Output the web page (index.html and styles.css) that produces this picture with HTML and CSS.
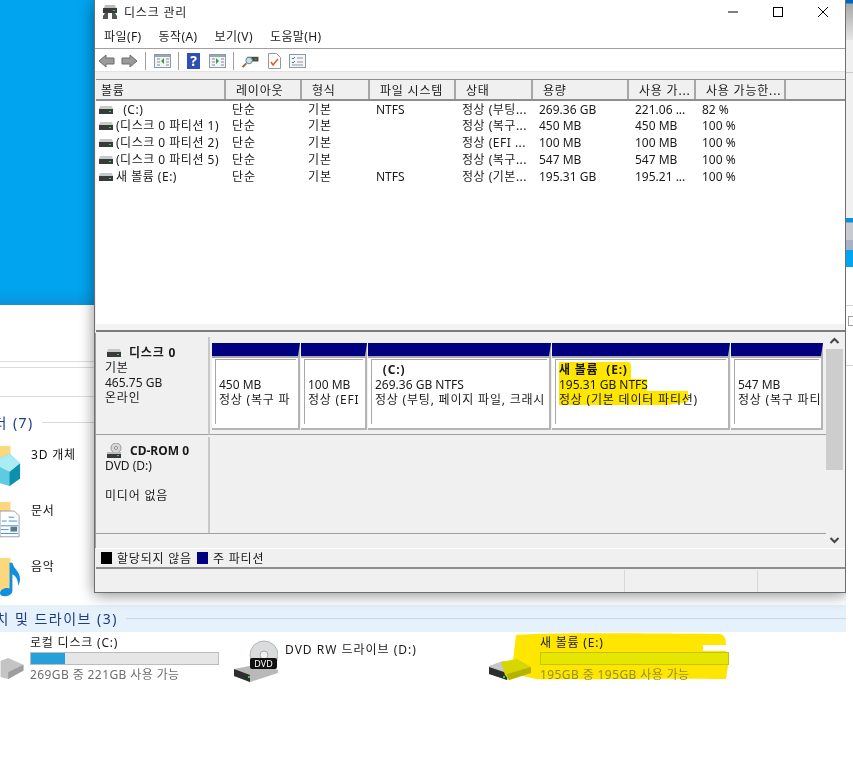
FILE: index.html
```html
<!DOCTYPE html>
<html lang="ko">

<head>
    <title>디스크 관리</title>
    <meta charset="UTF-8">
    <link rel="stylesheet" href="styles.css">
</head>

<body>
<svg class="defs" width="0" height="0">
    <symbol id="hdd" viewBox="0 0 14 8">
        <path d="M1 0h12l1 3H0z" fill="#c9c9c9"/>
        <rect y="3" width="14" height="5" fill="#3a3a3a"/>
        <rect x="10" y="5" width="2" height="1" fill="#35d04a"/>
    </symbol>
    <symbol id="arrow" viewBox="0 0 17 14">
        <path d="M8 1 1 7l7 6V10h8V4H8z" fill="#9a9a9a" stroke="#6d6d6d"/>
    </symbol>
    <symbol id="panel" viewBox="0 0 17 14">
        <rect x=".5" y=".5" width="16" height="13" fill="#f4f4f4" stroke="#8a9aa6"/>
        <rect x="1" y="1" width="15" height="2" fill="#9aa7b2"/>
        <path d="M3 5h3M3 8h3M3 11h3M12 5h3M12 8h3M12 11h3" stroke="#7f8f9c"/>
    </symbol>
</svg>

<svg class="marker-drive" viewBox="0 0 222 48">
    <path d="M10 3 C60 0 170 2 214 2 Q220 3 220 12 L220 13 H197 V19 H220 L222 34 220 47 C150 46 60 48 30 47 L0 40 C4 30 8 30 8 20z" fill="#ffe600"/>
</svg>

<div class="explorer">
    <div class="wallpaper"></div>
    <div class="rules">
        <div class="rule"></div>
        <div class="rule"></div>
        <div class="rule"></div>
    </div>

    <div class="group-title folders"><span>폴더 (7)</span><i></i></div>
    <div class="folder-item first">
        <svg class="folder-icon" viewBox="0 0 22 42">
            <rect width="11" height="30" fill="#fbd87d"/>
            <path d="M0 13 10 8l11 10v16L10 42 0 39z" fill="#5fcbe0"/>
            <path d="M10 27v15l11-8V18z" fill="#0e8fae"/>
            <path d="M0 13 10 8l11 10-11 9-10-5z" fill="#a9ecf3"/>
        </svg>
        <span>3D 개체</span>
    </div>
    <div class="folder-item">
        <svg class="folder-icon" viewBox="0 0 22 42">
            <rect width="11" height="28" fill="#fbd87d"/>
            <path d="M0 9.500h15l5 5v22H0z" fill="#fff" stroke="#9b9b9b"/>
            <path d="M2 20h5M9 16h6M9 20h9M1 25h18M1 29h8M1 33h18" stroke="#3d8fd1"/>
            <rect x="11" y="26" width="7" height="5" fill="#5b7a8c"/>
        </svg>
        <span>문서</span>
    </div>
    <div class="folder-item last">
        <svg class="folder-icon" viewBox="0 0 22 42">
            <rect width="11" height="36" fill="#fbd87d"/>
            <path d="M10 5h3c1 6 8 9 8 17 0 3-1 5-2 7 0-6-2-10-6-12v17c0 4-4 6-8 6-3 0-5-1-5-3 0-4 6-7 10-5z" fill="#0f8fe0"/>
        </svg>
        <span>음악</span>
    </div>

    <div class="group-title drives"><span>장치 및 드라이브 (3)</span><i></i></div>
    <div class="drive-list">
        <div class="drive drive-c">
            <svg class="drive-icon small" viewBox="0 0 24 22">
                <path d="M0 3 8 0l16 7v6L8 22l-8-2z" fill="#c4c4c4"/>
                <path d="M8 22l16-9V7L8 15z" fill="#9e9e9e"/>
            </svg>
            <div class="drive-info">
                <div>로컬 디스크 (C:)</div>
                <div class="usage"><div class="used used-c"></div></div>
                <div class="free">269GB 중 221GB 사용 가능</div>
            </div>
        </div>
        <div class="drive drive-d">
            <svg class="dvd-icon" viewBox="0 0 44 42">
                <circle cx="30" cy="15" r="14" fill="#d8dcdc" stroke="#b5b5b5"/>
                <circle cx="30" cy="15" r="4" fill="#f2f2f2" stroke="#aaa"/>
                <path d="M0 29 26 24l18 6v3L16 42 0 36z" fill="#b9b9b9"/>
                <path d="M0 29v7l16 6 0-7z" fill="#2e2e2e"/>
                <rect x="16" y="18" width="27" height="11" rx="2" fill="#111"/>
                <text x="29.500" y="27" class="dvd-label">DVD</text>
                <rect x="14" y="36" width="2" height="2" fill="#35d04a"/>
            </svg>
            <div class="drive-name">DVD RW 드라이브 (D:)</div>
        </div>
        <div class="drive drive-e">
            <svg class="drive-icon" viewBox="0 0 42 21">
                <path d="M0 7 14 2l28 6v5L18 21 0 15z" fill="#c7c7c7"/>
                <path d="M0 8l18 6v7L0 15z" fill="#2d2d2d"/>
                <path d="M12 3 28 0l14 8v6L20 21l-4-5z" fill="#d6d600"/>
                <path d="M18 15 42 8v6L20 21z" fill="#b4b400"/>
                <rect x="14" y="17" width="2" height="2" fill="#35d04a"/>
            </svg>
            <div class="drive-info">
                <div>새 볼륨 (E:)</div>
                <div class="usage"><div class="used used-e"></div></div>
                <div class="free">195GB 중 195GB 사용 가능</div>
            </div>
        </div>
    </div>
</div>

<div class="window">
    <div class="titlebar">
        <svg class="title-icon" viewBox="0 0 16 14">
            <path d="M3 0h10l1 3H2z" fill="#bdbdbd"/>
            <rect x="1" y="3" width="14" height="5" fill="#3a3a3a"/>
            <rect x="11" y="5" width="2" height="1" fill="#35d04a"/>
            <path d="M3 8h3v6H1v-3zM10 8h3l2 3v3h-5z" fill="#555"/>
        </svg>
        <span class="title-text">디스크 관리</span>
        <div class="caption-buttons">
            <svg viewBox="0 0 10 10"><path d="M0 5h10" stroke="#000"/></svg>
            <svg viewBox="0 0 10 10"><rect x=".5" y=".5" width="9" height="9" fill="none" stroke="#000"/></svg>
            <svg viewBox="0 0 10 10"><path d="M0 0l10 10M10 0 0 10" stroke="#000"/></svg>
        </div>
    </div>

    <div class="menubar">
        <span>파일(F)</span>
        <span>동작(A)</span>
        <span>보기(V)</span>
        <span>도움말(H)</span>
    </div>

    <div class="toolbar">
        <svg class="tool"><use href="#arrow"/></svg>
        <svg class="tool flip"><use href="#arrow"/></svg>
        <i class="tool-sep"></i>
        <svg class="tool" viewBox="0 0 17 14">
            <use href="#panel"/>
            <path d="M10 4v6L7 7z" fill="#2f9e44"/>
        </svg>
        <i class="tool-sep"></i>
        <svg class="tool help" viewBox="0 0 13 16">
            <rect width="13" height="16" fill="#2f4fb5"/>
            <text x="6.500" y="13" class="help-mark">?</text>
        </svg>
        <svg class="tool" viewBox="0 0 17 14">
            <use href="#panel"/>
            <path d="M7 4v6l3-3z" fill="#2f9e44"/>
        </svg>
        <i class="tool-sep"></i>
        <svg class="tool" viewBox="0 0 17 15">
            <rect x="5" y="3" width="12" height="5" fill="#4a4a4a"/>
            <rect x="13" y="5" width="2" height="1" fill="#35d04a"/>
            <circle cx="7" cy="7" r="3.500" fill="#bfe0ee" stroke="#777"/>
            <path d="M4 10 0 14" stroke="#8a6a4a" stroke-width="2"/>
        </svg>
        <svg class="tool doc" viewBox="0 0 13 16">
            <path d="M.5.500h8l4 4v11H.5z" fill="#fff" stroke="#999"/>
            <path d="M3 9l2 3 5-6" fill="none" stroke="#e2592a" stroke-width="1.500"/>
        </svg>
        <svg class="tool" viewBox="0 0 17 14">
            <rect x=".5" y=".5" width="16" height="13" fill="#f6f6f6" stroke="#8a9aa6"/>
            <path d="M3 4l1 1 2-2M3 8l1 1 2-2" fill="none" stroke="#2f74c0"/>
            <path d="M8 4h6M8 8h6M3 11h11" stroke="#8a9aa6"/>
        </svg>
    </div>

    <div class="list-pane">
        <table class="volumes">
            <colgroup>
                <col class="c-volume"><col class="c-layout"><col class="c-type"><col class="c-fs">
                <col class="c-state"><col class="c-size"><col class="c-free"><col class="c-pct"><col>
            </colgroup>
            <thead>
                <tr>
                    <th>볼륨</th><th class="pad">레이아웃</th><th class="pad">형식</th><th class="pad">파일 시스템</th>
                    <th class="pad">상태</th><th class="pad">용량</th><th class="pad">사용 가...</th><th class="pad">사용 가능한...</th><th></th>
                </tr>
            </thead>
            <tbody>
                <tr>
                    <td><svg class="hdd"><use href="#hdd"/></svg>&nbsp; (C:)</td><td class="ko">단순</td><td class="ko">기본</td><td class="num">NTFS</td>
                    <td>정상 (부팅...</td><td class="num">269.36 GB</td><td class="num">221.06 ...</td><td class="num">82 %</td><td></td>
                </tr>
                <tr>
                    <td><svg class="hdd"><use href="#hdd"/></svg>(디스크 0 파티션 1)</td><td class="ko">단순</td><td class="ko">기본</td><td></td>
                    <td>정상 (복구...</td><td class="num">450 MB</td><td class="num">450 MB</td><td class="num">100 %</td><td></td>
                </tr>
                <tr>
                    <td><svg class="hdd"><use href="#hdd"/></svg>(디스크 0 파티션 2)</td><td class="ko">단순</td><td class="ko">기본</td><td></td>
                    <td>정상 (EFI ...</td><td class="num">100 MB</td><td class="num">100 MB</td><td class="num">100 %</td><td></td>
                </tr>
                <tr>
                    <td><svg class="hdd"><use href="#hdd"/></svg>(디스크 0 파티션 5)</td><td class="ko">단순</td><td class="ko">기본</td><td></td>
                    <td>정상 (복구...</td><td class="num">547 MB</td><td class="num">547 MB</td><td class="num">100 %</td><td></td>
                </tr>
                <tr>
                    <td><svg class="hdd"><use href="#hdd"/></svg>새 볼륨 (E:)</td><td class="ko">단순</td><td class="ko">기본</td><td class="num">NTFS</td>
                    <td>정상 (기본...</td><td class="num">195.31 GB</td><td class="num">195.21 ...</td><td class="num">100 %</td><td></td>
                </tr>
            </tbody>
        </table>
    </div>

    <div class="disk-pane">
        <div class="disk-rows">
            <div class="disk-row">
                <div class="disk-info">
                    <div class="disk-name"><svg class="hdd"><use href="#hdd"/></svg>디스크 0</div>
                    <div>기본</div>
                    <div class="num">465.75 GB</div>
                    <div>온라인</div>
                </div>
                <div class="partitions">
                    <div class="partition p1">
                        <div class="part-body"><div>&nbsp;</div><div class="num">450 MB</div><div>정상 (복구 파</div></div>
                    </div>
                    <div class="partition p2">
                        <div class="part-body"><div>&nbsp;</div><div class="num">100 MB</div><div>정상 (EFI</div></div>
                    </div>
                    <div class="partition p3">
                        <div class="part-body"><div class="part-name">&nbsp; (C:)</div><div class="num">269.36 GB NTFS</div><div>정상 (부팅, 페이지 파일, 크래시</div></div>
                    </div>
                    <div class="partition p4">
                        <div class="part-body"><div class="part-name">새 볼륨&nbsp; (E:)</div><div class="num">195.31 GB NTFS</div><div>정상 (기본 데이터 파티션)</div></div>
                    </div>
                    <div class="partition p5">
                        <div class="part-body"><div>&nbsp;</div><div class="num">547 MB</div><div>정상 (복구 파티</div></div>
                    </div>
                </div>
            </div>
            <div class="disk-row cd-row">
                <div class="disk-info">
                    <div class="disk-name">
                        <svg class="cd" viewBox="0 0 15 15">
                            <circle cx="9" cy="5" r="5" fill="#d8d8d8" stroke="#9a9a9a"/>
                            <circle cx="9" cy="5" r="1.500" fill="#fff" stroke="#888"/>
                            <rect y="9" width="14" height="2" fill="#bdbdbd"/>
                            <rect y="11" width="14" height="4" fill="#3a3a3a"/>
                            <rect x="10" y="12" width="2" height="1" fill="#35d04a"/>
                        </svg><span class="num">CD-ROM 0</span>
                    </div>
                    <div class="num">DVD (D:)</div>
                    <div>&nbsp;</div>
                    <div>미디어 없음</div>
                </div>
            </div>
        </div>
        <div class="vscroll">
            <svg viewBox="0 0 16 16"><path d="M4 10l4-4 4 4" fill="none" stroke="#444" stroke-width="2"/></svg>
            <div class="track"><div class="thumb"></div></div>
            <svg viewBox="0 0 16 16"><path d="M4 6l4 4 4-4" fill="none" stroke="#444" stroke-width="2"/></svg>
        </div>
    </div>

    <div class="legend">
        <i class="swatch black"></i><span>할당되지 않음</span>
        <i class="swatch navy"></i><span>주 파티션</span>
    </div>

    <div class="statusbar">
        <div class="status-main"></div>
        <div class="status-cell"></div>
        <div class="status-end"></div>
    </div>
</div>

<svg class="marker-part" viewBox="0 0 132 45">
    <path d="M1 1H70Q73 1 73 6V18H89V30H130Q131 36 130 41L110 44H1z" fill="#ffe600"/>
</svg>

<div class="side-strip">
    <div class="strip-a"></div>
    <div class="strip-b"></div>
    <div class="strip-c"></div>
    <div class="strip-d"></div>
    <div class="strip-e"></div>
    <div class="strip-f"><i class="strip-box"></i></div>
</div>
</body>

</html>
```

FILE: styles.css
```css
:root {
    --face: #f0f0f0;
    --line: #a0a0a0;
    --navy: #000080;
    --ui-font: "Noto Sans", "Noto Sans CJK KR", sans-serif;
}

* {
    box-sizing: border-box;
}

html,
body {
    height: 100%;
}

body {
    margin: 0;
    position: relative;
    overflow: hidden;
    background: #fff;
    color: #1a1a1a;
    font-family: var(--ui-font);
    font-size: 12px;
    line-height: 15px;
    letter-spacing: 0.8px;
}

.defs {
    position: absolute;
}

.num {
    letter-spacing: 0;
}

/* explorer behind the window */
.explorer {
    position: relative;
}

.wallpaper {
    height: 305px;
    background: linear-gradient(#00a4ef 290px, #0a94dc);
}

.rules {
    padding-top: 56px;
}

.rule {
    height: 1px;
    background: #dcdcdc;
    margin-bottom: 5px;
}

.rule:last-child {
    margin: 28px 0 0;
}

.group-title {
    display: flex;
    align-items: center;
    gap: 8px;
    white-space: nowrap;
    color: #1e3a8a;
    font-size: 14px;
    letter-spacing: 1.5px;
}

.group-title i {
    flex: 1;
    height: 1px;
    background: #d9d9d9;
}

.folders {
    margin: 15px 0 0 -21px;
    height: 20px;
}

.folder-item {
    display: flex;
    height: 56px;
    gap: 10px;
    color: #111;
}

.folder-item span {
    margin-top: 2px;
}

.folder-item.first {
    margin-top: 13px;
}

.folder-item.last {
    height: 48px;
}

.folder-icon {
    width: 21px;
    height: 42px;
    flex: none;
}

.drives {
    margin-left: -19px;
    height: 27px;
    background: #e5f1fb;
}

.drives i {
    background: #c7d8e6;
}

.drive-list {
    display: flex;
    height: 60px;
}

.drive {
    display: flex;
}

.drive-c {
    width: 234px;
}

.drive-d {
    width: 255px;
}

.drive-icon {
    width: 42px;
    height: 21px;
    margin-top: 27px;
    flex: none;
}

.drive-icon.small {
    width: 24px;
    margin-top: 26px;
    margin-right: 6px;
}

.drive-e .drive-icon {
    margin-right: 9px;
}

.dvd-icon {
    width: 44px;
    height: 42px;
    margin-top: 8px;
    flex: none;
}

.dvd-label {
    fill: #fff;
    font-size: 9px;
    letter-spacing: 0;
    text-anchor: middle;
    font-family: var(--ui-font);
}

.drive-name {
    margin: 10px 0 0 7px;
    letter-spacing: 1px;
    white-space: nowrap;
}

.drive-info {
    width: 189px;
    padding-top: 3px;
    white-space: nowrap;
}

.usage {
    height: 13px;
    margin-top: 2px;
    border: 1px solid #bcbcbc;
    background: #e6e6e6;
}

.used {
    height: 100%;
}

.used-c {
    width: 34px;
    background: #26a0da;
}

.free {
    margin-top: 2px;
    color: #6d6d6d;
    letter-spacing: 0.4px;
}

.drive-e .usage {
    border-color: #c4c400;
    background: #e6e600;
}

.drive-e .free {
    color: #96901a;
}

/* highlighter strokes */
.marker-drive {
    position: absolute;
    left: 506px;
    top: 632px;
    width: 222px;
    height: 48px;
}

.marker-part {
    position: absolute;
    left: 558px;
    top: 361px;
    width: 132px;
    height: 45px;
    mix-blend-mode: multiply;
}

/* disk management window */
.window {
    position: absolute;
    left: 94px;
    top: 0;
    width: 752px;
    height: 593px;
    display: flex;
    flex-direction: column;
    background: var(--face);
    border: 1px solid #6e6e6e;
    border-top: 0;
    box-shadow: 0 2px 14px rgba(0, 0, 0, 0.45);
}

.titlebar {
    height: 24px;
    flex: none;
    background: #fff;
    display: flex;
    align-items: center;
    padding-left: 7px;
}

.title-icon {
    width: 16px;
    height: 14px;
    margin-right: 6px;
}

.title-text {
    flex: 1;
}

.caption-buttons {
    display: flex;
    padding-right: 17px;
}

.caption-buttons svg {
    width: 10px;
    height: 10px;
    margin-left: 35px;
    overflow: visible;
}

.menubar {
    height: 25px;
    flex: none;
    background: #fff;
    border-bottom: 1px solid var(--line);
    display: flex;
    align-items: center;
    gap: 17px;
    padding: 1px 0 0 9px;
    letter-spacing: 0.4px;
}

.toolbar {
    height: 23px;
    flex: none;
    background: #fff;
    border-bottom: 1px solid #e3e3e3;
    display: flex;
    align-items: center;
    padding: 2px 0 0 3px;
}

.tool {
    width: 17px;
    height: 14px;
    margin-right: 6px;
}

.tool.flip {
    transform: scaleX(-1);
}

.tool.help {
    width: 13px;
    height: 16px;
    margin-right: 9px;
}

.tool.doc {
    width: 13px;
    height: 16px;
    margin: 0 8px 0 3px;
}

.help-mark {
    fill: #fff;
    font-size: 14px;
    font-weight: 700;
    letter-spacing: 0;
    text-anchor: middle;
    font-family: var(--ui-font);
}

.tool-sep {
    width: 1px;
    height: 18px;
    background: var(--line);
    margin: 0 8px 0 1px;
}

.list-pane {
    height: 253px;
    flex: none;
    margin: 7px 0 0 1px;
    background: #fff;
    border-top: 1px solid #8e8e8e;
    border-bottom: 2px solid #7d7d7d;
    overflow: hidden;
    box-shadow: inset 0 -6px 0 #f3f3f3;
}

.volumes {
    width: 100%;
    border-collapse: collapse;
    table-layout: fixed;
}

.c-volume { width: 129px; }
.c-layout { width: 76px; }
.c-type { width: 68px; }
.c-fs { width: 86px; }
.c-state { width: 77px; }
.c-size { width: 96px; }
.c-free { width: 67px; }
.c-pct { width: 90px; }

.volumes th {
    height: 20px;
    padding: 1px 0 0 5px;
    background: var(--face);
    border-right: 2px solid #a6a6a6;
    border-bottom: 2px solid #8e8e8e;
    font-weight: 400;
    text-align: left;
    white-space: nowrap;
    overflow: hidden;
}

.volumes th.pad {
    padding-left: 10px;
}

.volumes th:last-child {
    border-right: 0;
}

.volumes td {
    height: 17px;
    padding: 0 0 0 7px;
    letter-spacing: 0.5px;
    white-space: nowrap;
    overflow: hidden;
}

.volumes td.ko {
    letter-spacing: 1px;
}

.volumes td.num {
    letter-spacing: 0;
}

.volumes td:first-child {
    padding-left: 3px;
}

.hdd {
    width: 14px;
    height: 8px;
    margin-right: 3px;
}

.disk-pane {
    height: 215px;
    flex: none;
    display: flex;
    margin-top: 1px;
    border-left: 1px solid var(--line);
}

.disk-rows {
    flex: 1;
    border-bottom: 1px solid var(--line);
    height: 201px;
    overflow: hidden;
}

.disk-row {
    display: flex;
    height: 98px;
    margin-top: 4px;
}

.cd-row {
    height: 97px;
    margin-top: 2px;
}

.disk-info {
    width: 114px;
    flex: none;
    padding: 8px 0 0 9px;
    border-right: 2px solid #c8c8c8;
    border-bottom: 1px solid var(--line);
    white-space: nowrap;
}

.cd-row .disk-info {
    padding-top: 6px;
    border-bottom: 0;
}

.disk-name {
    font-weight: 700;
    display: flex;
    align-items: center;
}

.disk-name .hdd,
.disk-name .cd {
    margin: 0 8px 0 2px;
}

.cd {
    width: 15px;
    height: 15px;
}

.partitions {
    flex: 1;
    display: flex;
    gap: 1px;
    padding: 6px 3px 4px 2px;
    border-bottom: 1px solid var(--line);
}

.partition {
    flex: none;
    border-top: 13px solid var(--navy);
    border-right: 2px solid #b4b4b4;
    border-bottom: 2px solid #b4b4b4;
    background: #fff;
    padding: 3px 2px 4px 3px;
    overflow: hidden;
    box-shadow: inset 0 2px 0 #a8a8a8;
}

.p1 { width: 88px; }
.p2 { width: 66px; }
.p3 { width: 183px; }
.p4 { width: 178px; }
.p5 { width: 92px; }

.part-body {
    height: 100%;
    padding: 2px 0 0 3px;
    border-left: 1px solid #a8a8a8;
    border-top: 1px solid #a8a8a8;
    white-space: nowrap;
    overflow: hidden;
}

.part-name {
    font-weight: 700;
}

.vscroll {
    width: 17px;
    flex: none;
    display: flex;
    flex-direction: column;
    background: #f0f0f0;
    margin-right: 2px;
}

.vscroll svg {
    height: 16px;
    flex: none;
}

.track {
    flex: 1;
}

.thumb {
    height: 121px;
    background: #cdcdcd;
}

.legend {
    height: 21px;
    flex: none;
    margin-left: 1px;
    display: flex;
    align-items: center;
    padding-left: 5px;
    background: var(--face);
    border-top: 1px solid #fff;
    border-bottom: 2px solid #8e8e8e;
}

.swatch {
    width: 11px;
    height: 12px;
    margin-right: 5px;
}

.swatch.black {
    background: #000;
}

.swatch.navy {
    background: var(--navy);
    margin-left: 5px;
}

.statusbar {
    flex: 1;
    display: flex;
    background: var(--face);
    margin-top: 1px;
}

.status-main {
    width: 530px;
    border-right: 1px solid #d8d8d8;
}

.status-cell {
    width: 133px;
    border-right: 1px solid #d8d8d8;
}

.status-end {
    flex: 1;
}

/* other window peeking out on the right */
.side-strip {
    position: absolute;
    left: 846px;
    top: 0;
    width: 7px;
    height: 760px;
    display: flex;
    flex-direction: column;
    background: #fff;
}

.strip-a {
    height: 40px;
    background: linear-gradient(#0067c0 3px, #a8a8a8 4px, #e6e6e6);
}

.strip-b {
    height: 178px;
    background: #f0f0f0;
    border-top: 32px solid #f0f0f0;
    box-shadow: inset 0 33px 0 -32px #c9c9c9;
}

.strip-c {
    height: 22px;
    background: linear-gradient(#0a8fdc 4px, #c9c9d0 5px);
}

.strip-d {
    height: 27px;
    background: linear-gradient(#a8b0c4 10px, #00a4ef 10px);
}

.strip-e {
    height: 39px;
    border-bottom: 1px solid #d4d4d4;
}

.strip-f {
    height: 60px;
    padding-top: 10px;
    border-bottom: 1px solid #d4d4d4;
}

.strip-box {
    display: block;
    width: 5px;
    height: 10px;
    margin-left: 2px;
    border: 1px solid #a0a0a0;
    border-right: 0;
}
```
